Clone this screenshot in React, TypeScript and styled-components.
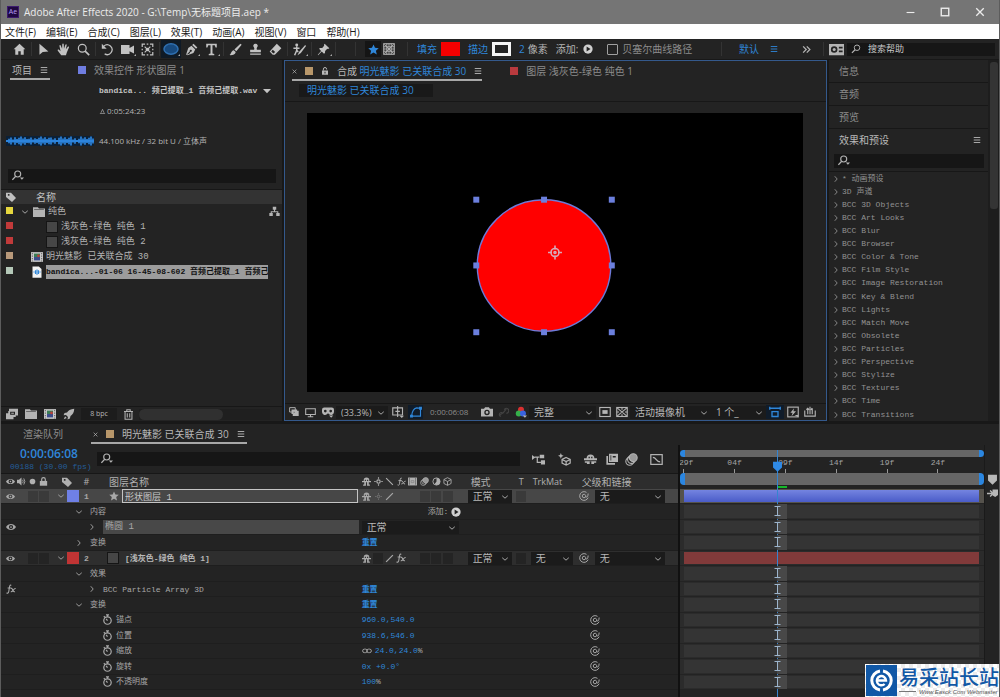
import React from 'react';
import styled, { createGlobalStyle, css } from 'styled-components';

const sans = '"Open Sans", "Noto Sans CJK SC", sans-serif';
const mono = '"Liberation Mono", "Noto Sans CJK SC", monospace';

const c = {
  panel: '#232323',
  gap: '#181818',
  field: '#161616',
  line: '#171717',
  head: '#333333',
  text: '#b4b4b4',
  dim: '#8c8c8c',
  blue: '#2f86d8',
};

const Global = createGlobalStyle`
  * { box-sizing: border-box; }
  body { margin: 0; background: ${c.gap}; }
  button, input, select { font: inherit; color: inherit; margin: 0; padding: 0; border: 0; background: none; border-radius: 0; }
  input:focus, select:focus { outline: none; }
  a { color: inherit; text-decoration: none; }
`;

/* ---------- icons ---------- */

const Svg = styled.svg<{ $s?: number }>`
  display: block;
  flex: none;
  width: ${p => p.$s ?? 14}px;
  height: ${p => p.$s ?? 14}px;
  fill: none;
  stroke: currentColor;
  stroke-width: 1.5;
`;

const F = { fill: 'currentColor', stroke: 'none' } as const;

const shapes: Record<string, React.ReactNode> = {
  home: <path {...F} d="M8 1 0.8 7.6 2.8 7.8V14.5H6.5V10H9.5V14.5H13.2V7.8L15.2 7.6Z" />,
  arrow: <path {...F} d="M3 1V14.5L7 11 14 10.5Z" />,
  hand: <path {...F} d="M5.2 15 1 9.4C.4 8.4 1.6 7.6 2.5 8.4L4.4 10 3 3.6C2.8 2.4 4.2 2.1 4.6 3.2L6.3 7.2 6.5 1.6C6.6.4 8.2.4 8.3 1.6L8.6 7 10.3 2.3C10.7 1.2 12.1 1.6 11.9 2.8L10.9 7.7 13.3 4.6C14 3.8 15.2 4.5 14.7 5.5L12.2 11.5 11 15Z" />,
  zoom: <><circle cx="6.5" cy="6.5" r="4.8" /><path d="M10 10 15 15" strokeWidth="2" /></>,
  rotate: <><path d="M3.5 3.8A6 6 0 1 1 4.5 13.4" /><path {...F} d="M1 1V7H7Z" /></>,
  camera: <path {...F} d="M0 2.5H10.5V6L16 3V13L10.5 10V13.5H0Z" />,
  pan: <><path d="M1.5 5V1.5H5M11 1.5H14.5V5M14.5 11V14.5H11M5 14.5H1.5V11M7 1.5H9M7 14.5H9M1.5 7V9M14.5 7V9" /><path d="M4.5 4.5 11.5 11.5M11.5 4.5 4.5 11.5" /><circle {...F} cx="8" cy="8" r="2.2" /></>,
  ellipse: <ellipse cx="8" cy="8" rx="7" ry="5.2" fill="#174a80" stroke="#2f6fb0" />,
  pen: <path {...F} fillRule="evenodd" d="M10.5.8 15.2 5.5 13.6 7.2 8.8 2.4ZM8 3.4 12.6 8 10.4 12.2 3 15 2.2 14.2 6 10.2A1.3 1.3 0 1 1 6.8 10.8L5.5 13 1.2 14.8 4 6Z" />,
  type: <path {...F} d="M1.5 1H14.5V5.4H13L12 2.8H9.2V13L11.4 13.5V15H4.6V13.5L6.8 13V2.8H4L3 5.4H1.5Z" />,
  brush: <path {...F} d="M14 .8 15.6 2.2 9 10 6.6 8ZM5.8 8.8 8.3 11C7.8 14 4 15.4.4 14.9 3 13.6 2.4 9.6 5.8 8.8Z" />,
  stamp: <path {...F} d="M8 .8A2.6 2.6 0 0 1 10 5.2C9.2 6.4 9.4 7.4 9.8 8.4H14.6V11.4H1.4V8.4H6.2C6.6 7.4 6.8 6.4 6 5.2A2.6 2.6 0 0 1 8 .8ZM1.4 12.8H14.6V14.6H1.4Z" />,
  eraser: <path {...F} fillRule="evenodd" d="M9.6 1 15.2 6.6 7.2 14.6H4.6L.8 10.6ZM4.6 8.4 2.8 10.6 5.4 13 7.6 11.2Z" />,
  roto: <><circle {...F} cx="4.6" cy="2.4" r="1.8" /><path d="M.5 6.5H8M4.6 4V9L2 15M4.6 9 6.4 11" strokeWidth="1.8" /><path {...F} d="M15 2.6 16 3.8 9.6 12.4 5.6 15 7.4 11Z" /></>,
  pin: <path {...F} d="M9.4.8 15.2 6.6 13.6 7.4 12.6 7 10 9.8 9.8 12.4 8.6 13.2 5.8 10.6 1.4 15 1 14.6 5 9.8 2.6 7.2 3.6 6.2 6.4 6 8.8 3.4 8.6 2Z" />,
  star: <path {...F} d="M8 .6 10.2 5.6 15.6 6.1 11.5 9.7 12.8 15.2 8 12.3 3.2 15.2 4.5 9.7.4 6.1 5.8 5.6Z" />,
  pattern: <><rect x="1" y="1" width="14" height="14" /><path strokeWidth="1.2" d="M1 5H15M1 8H15M1 11H15M5 1V15M8 1V15M11 1V15M2 2 14 14M14 2 2 14" /></>,
  play: <><circle {...F} cx="8" cy="8" r="7.4" /><path d="M5.8 4 12 8 5.8 12Z" fill="#222" stroke="none" /></>,
  menu: <path d="M1.5 3H14.5M1.5 8H14.5M1.5 13H14.5" strokeWidth="1.8" />,
  more: <path d="M2 2.5 7.5 8 2 13.5M8.5 2.5 14 8 8.5 13.5" strokeWidth="2.2" />,
  reset: <><path {...F} fillRule="evenodd" d="M0 2H16V14H0ZM5.5 4.5A3.5 3.5 0 1 0 5.5 11.5 3.5 3.5 0 1 0 5.5 4.5ZM10.5 5V7H14.5V5ZM10.5 9V11H14.5V9Z" /><circle {...F} cx="5.5" cy="8" r="1.6" /></>,
  search: <><circle cx="9.6" cy="6" r="4.4" /><path d="M6.5 9.3 1.5 14.2" strokeWidth="2" /></>,
  searchMenu: <><circle cx="7.6" cy="5.4" r="4" /><path d="M4.8 8.5.5 13" strokeWidth="1.8" /><path {...F} d="M10.5 10H16L13.2 13Z" /></>,
  down: <path d="M2.5 5.5 8 10.4 13.5 5.5" strokeWidth="1.8" />,
  right: <path d="M5.5 2.5 10.4 8 5.5 13.5" strokeWidth="1.8" />,
  tri: <path {...F} d="M0 4H16L8 12.5Z" />,
  tag: <path {...F} fillRule="evenodd" d="M0 1H8L16 9.5 9.6 16 0 8ZM3 3.2V5.8H5.6V3.2Z" />,
  folder: <path {...F} d="M0 1.5H6.5L8 3.2H16V14.5H0ZM1.5 4.2V5H14.5V4.2Z" fillRule="evenodd" />,
  comp: <><rect x="0" y="1.5" width="16" height="13" fill="#c8c8c8" stroke="none" /><path d="M1.8 2.5V14M14.2 2.5V14" stroke="#666" strokeWidth="1.4" strokeDasharray="1.8 1.6" /><rect x="4" y="3.5" width="8" height="5" fill="#3b7d56" stroke="none" /><rect x="4" y="8" width="8" height="4.5" fill="#3d4d8c" stroke="none" /><circle cx="10" cy="6.5" r="1.8" fill="#c23b3b" stroke="none" /></>,
  wav: <><path d="M2 .5H10.5L14 4V15.5H2Z" fill="#f2f2f2" stroke="none" /><path d="M4 7.4V8.6M6 5.5V10.5M8 4.5V11.5M10 5.5V10.5M12 7.4V8.6" stroke="#2f86d8" /></>,
  tree: <path {...F} d="M5.5 1H10.5V5.5H8.8V7.5H13.5V10H15.5V14.5H10.5V10H12V9H4V10H5.5V14.5H.5V10H2.5V7.5H7.2V5.5H5.5Z" />,
  interpret: <path {...F} fillRule="evenodd" d="M4 1H16V10H13V12H10V15H0V7H3V4H4ZM5.5 5V9H12V5ZM7 6.2H10.5V7.6H7Z" />,
  rocket: <path {...F} d="M15 1C10 1.4 6.6 3.4 5.4 6L2 6.6.8 9.6 4 9.2 6.6 12 6 15.2 9.2 14 10 10.6C13 8.8 14.8 5.6 15 1ZM2.8 11 1 15 5 13.2Z" />,
  trash: <path d="M1.5 3.5H14.5M5.5 3V1.2H10.5V3M3 3.5V15H13V3.5M6.2 6V12.5M9.8 6V12.5" />,
  eye: <path {...F} fillRule="evenodd" d="M0 8C3.5 1.8 12.5 1.8 16 8 12.5 14.2 3.5 14.2 0 8ZM8 4.6A3.4 3.4 0 1 0 8 11.4 3.4 3.4 0 1 0 8 4.6ZM8 6.6A1.4 1.4 0 1 1 8 9.4 1.4 1.4 0 1 1 8 6.6Z" />,
  speaker: <><path {...F} d="M0 5H3.5L8 1V15L3.5 11H0Z" /><path d="M10 5Q12 8 10 11M12 2.5Q16 8 12 13.5" /></>,
  dot: <circle {...F} cx="8" cy="8" r="5" />,
  lock: <><path {...F} d="M1.5 7H14.5V15.5H1.5Z" /><path d="M4.8 7V4.2A3.2 3.2 0 0 1 11.2 4.2V7" strokeWidth="2" /></>,
  unlock: <><path {...F} fillRule="evenodd" d="M2 7H14V15.5H2ZM7 9.5V13H9V9.5Z" /><path d="M4.8 7V4.2A3.2 3.2 0 0 1 11.2 4.2V5" strokeWidth="2" /></>,
  shy: <path {...F} d="M8 1A5 5 0 0 1 13 6V7H16V9.4H12V13.5H14V15.5H9V9.5H7V15.5H2V13.5H4V9.4H0V7H3V6A5 5 0 0 1 8 1ZM5 5V7H7V5ZM9 5V7H11V5Z" fillRule="evenodd" />,
  sun: <><circle cx="8" cy="8" r="3" strokeWidth="2" /><path d="M8 .5V3M8 13V15.5M.5 8H3M13 8H15.5" strokeWidth="2" /></>,
  back: <path d="M2 2 14 14" strokeWidth="2" />,
  slash: <path d="M2 14 14 2" strokeWidth="2.2" />,
  fx: <><path d="M8.5 2.2C6.4.8 5.8 3 5.4 6L4.4 12C4 14.6 2.6 15.4 1 14M2.6 6.4H8.4" strokeWidth="1.7" /><path d="M8 7.2C10.6 5.6 11 13.8 14.4 12.4M15.4 7.4C12.4 6.4 11 13.4 7.6 12.4" strokeWidth="1.7" /></>,
  film: <><path {...F} d="M0 1H16V15H0Z" /><path d="M2.5 2.5V14M13.5 2.5V14" stroke="#333" strokeDasharray="2 1.6" /><path d="M5.5 6.5H10.5V10H5.5Z" stroke="#777" strokeWidth="1" /></>,
  blur: <g strokeWidth="1.3"><circle cx="5.8" cy="10.2" r="4.8" /><circle cx="8" cy="8" r="4.8" /><circle cx="10.2" cy="5.8" r="4.8" fill="#9a9a9a" /></g>,
  half: <><circle cx="8" cy="8" r="6.4" strokeWidth="1.6" /><path {...F} d="M8 1.6A6.4 6.4 0 0 1 8 14.4L4.4 13 8 8Z" /></>,
  cube: <path d="M8 1.2 14.4 4.5V11.5L8 14.8 1.6 11.5V4.5ZM1.6 4.5 8 8 14.4 4.5M8 8V14.8" />,
  whip: <path strokeWidth="1.6" d="M10.8 8.2A2.8 2.8 0 1 1 8 5.2C9.6 5.2 10.8 6.4 10.8 8.2M10.8 8.2C11 11 14.6 10.4 14.6 4M14.6 10.6A7 7 0 1 1 12 2.2" />,
  watch: <><circle cx="8" cy="9.5" r="5.4" strokeWidth="1.8" /><path d="M5.8 1.2H10.2M8 1.2V4M2.6 3.4 4.6 5M8 9.5 6 7" strokeWidth="1.8" /></>,
  link: <><rect x="1" y="5" width="7.4" height="5.6" rx="2.8" /><rect x="7.6" y="5" width="7.4" height="5.6" rx="2.8" /></>,
  stack: <><path d="M1 1H10V8H1Z" /><path {...F} fillRule="evenodd" d="M4 4H13V6H15.5V14.5H6V11H4ZM7.5 7.5V10L9 9V7.5Z" /></>,
  monitor: <path d="M1 2.5H15V11H1ZM8 11V14M4 14.2H12" />,
  goggles: <path {...F} fillRule="evenodd" d="M3 2H13A3 3 0 0 1 16 5V8A4 4 0 0 1 9.5 11L8 9.5 6.5 11A4 4 0 0 1 0 8V5A3 3 0 0 1 3 2ZM4.4 5A1.8 1.8 0 1 0 4.4 8.6 1.8 1.8 0 1 0 4.4 5ZM11.6 5A1.8 1.8 0 1 0 11.6 8.6 1.8 1.8 0 1 0 11.6 5ZM9.5 12.5H15L12.2 15.5Z" />,
  grid: <><path d="M1 2.5H14V12H1ZM7.5 0V14.5M4.5 7.2H10.5" /><path {...F} d="M10 13H16L13 16Z" /></>,
  mask: <path d="M2 13.5H14V3L9 2.5C5 3 3 6 2 13.5ZM.8 12.3H3.2M12.8 1.8H15.2V4.2H12.8ZM.8 12.3V14.7H3.2V12.3Z" />,
  photo: <path {...F} fillRule="evenodd" d="M0 3.5H4L5.5 1.5H10.5L12 3.5H16V14H0ZM8 5A3.6 3.6 0 1 0 8 12.2 3.6 3.6 0 1 0 8 5ZM8 6.8A1.8 1.8 0 1 1 8 10.4 1.8 1.8 0 1 1 8 6.8Z" />,
  show: <path d="M2 13 6 9M4 14A3 3 0 1 1 7 9L12 3M9 4A3.5 3.5 0 1 1 12 9" />,
  rgb: <><circle cx="8" cy="5" r="4" fill="#d93030" stroke="none" /><circle cx="5" cy="10" r="4" fill="#35b04a" stroke="none" /><circle cx="10.6" cy="10" r="4" fill="#3a63e0" stroke="none" /><path {...F} d="M10.5 12.5H16L13.2 15.5Z" /></>,
  roi: <><rect x="1" y="2" width="14" height="12" /><path {...F} d="M4.5 5.5H11.5V10.5H4.5Z" /></>,
  alpha: <><rect x="1" y="2" width="14" height="12" /><path d="M1.5 2.5 14.5 13.5M14.5 2.5 1.5 13.5M8 2V5M8 11V14M1 8H4M12 8H15" /></>,
  pixel: <path d="M1 1V5M15 1V5M1 3H15M4 7.5H12V14H4Z" strokeWidth="1.8" />,
  fast: <><rect x="1" y="1.5" width="14" height="13" /><path {...F} d="M9.5 3 4.5 9H7.5L6 13.5 12 7H8.5ZM10 12H15V15Z" /></>,
  render: <path d="M1 6V13.5H15V6M5 3V11M11 3V11M8 1V11M3.2 5 5 3 6.8 5M9.2 5 11 3" />,
  flow: <><path {...F} d="M0 2.5 4 5.5 0 8.5ZM9.5 2H15V6.5H9.5ZM11 9H16V14H11Z" /><path d="M3 5.2H9M6.5 5.2V11.5H11" /></>,
  draft3d: <><path d="M10 5.5 15 8V12.5L10 15 5 12.5V8ZM5 8 10 10.5 15 8M10 10.5V15" /><path {...F} d="M3.5 0 4.5 2.5 7 3.5 4.5 4.5 3.5 7 2.5 4.5 0 3.5 2.5 2.5Z" /></>,
  shyBig: <path {...F} fillRule="evenodd" d="M8 2A4.8 4.8 0 0 1 12.8 6.5H16V9H0V6.5H3.2A4.8 4.8 0 0 1 8 2ZM5.6 4.6V6.5H7.2V4.6ZM8.8 4.6V6.5H10.4V4.6ZM1 10H15V12H12.4V13.6H9V10.5H7V13.6H3.6V12H1Z" />,
  frames: <><path {...F} fillRule="evenodd" d="M4 1H16V12H4ZM6 3V10H7V3ZM9 4V6H13V4Z" /><path d="M1.6 4V14.4H12" strokeWidth="2.2" /></>,
  graph: <><rect x="1" y="2" width="14" height="12" /><path d="M3.5 5.5C8 5.5 7.5 11 12.5 11" /></>,
  marker: <path {...F} d="M1.5 1H14.5V9.5L8 15.5 1.5 9.5Z" />,
  keys: <><path d="M0 8H9M4.5 3.5 9 8 4.5 12.5" strokeWidth="2" /><path {...F} d="M8 2H16V10L12 13 8 11Z" /></>,
  min: <path d="M1 8H15" strokeWidth="2" />,
  max: <rect x="2" y="2" width="12" height="12" strokeWidth="2.2" />,
  close: <path d="M2 2 14 14M14 2 2 14" strokeWidth="2.2" />,
  pyramid: <path d="M8 3 11.5 11M8 3 4.5 11M2 12.5H14" />,
};

const Ico = ({ n, s }: { n: string; s?: number }) => (
  <Svg $s={s} viewBox="0 0 16 16" aria-hidden="true">{shapes[n]}</Svg>
);

/* ---------- window frame ---------- */

const Window = styled.div`
  position: relative;
  display: flex;
  flex-direction: column;
  height: 100vh;
  overflow: hidden;
  border: solid #5c5c5c;
  border-width: 0 1px;
  background: ${c.gap};
  color: ${c.text};
  font: 10px/14px ${sans};
  white-space: nowrap;
`;

const TitleBar = styled.header`
  display: flex;
  align-items: center;
  gap: 5px;
  flex: none;
  height: 24px;
  padding: 0 4px 0 6px;
  background: #757575;
  color: #ececec;
`;

const AppBadge = styled.span`
  width: 12px;
  height: 12px;
  border: 1px solid #3c1a6e;
  background: #1f0740;
  color: #b79cf5;
  font-size: 7px;
  line-height: 10px;
  text-align: center;
`;

const TitleText = styled.h1`
  flex: 1;
  margin: 0;
  font-size: 10px;
  line-height: 16px;
  font-weight: 400;
`;

const WindowButton = styled.button`
  display: flex;
  align-items: center;
  justify-content: center;
  width: 30px;
  height: 24px;
  margin-left: 0;
`;

const MenuBar = styled.nav`
  display: flex;
  align-items: center;
  gap: 10px;
  flex: none;
  height: 15px;
  padding-left: 4px;
  background: #fff;
  color: #1c1c1c;
`;

/* ---------- tool bar ---------- */

const Toolbar = styled.div`
  display: flex;
  align-items: center;
  flex: none;
  height: 21px;
  padding: 0 4px 0 8px;
  border-bottom: 1px solid ${c.gap};
  background: ${c.panel};
`;

const ToolButton = styled.button<{ $on?: boolean }>`
  position: relative;
  display: flex;
  align-items: center;
  justify-content: center;
  width: 20px;
  height: 18px;
  color: #c2c2c2;
  ${p => p.$on && css`background: #0f1a26;`}
`;

const Corner = styled.span`
  position: absolute;
  right: 1px;
  bottom: 2px;
  border: 1px solid #aaa;
  border-color: transparent #aaa #aaa transparent;
`;

const Divider = styled.span`
  width: 1px;
  height: 14px;
  margin: 0 1px 0 2px;
  background: #333;
`;

const ShapeOptions = styled.div`
  display: flex;
  align-items: center;
  flex: 1;
  padding-left: 16px;
`;

const ModeButton = styled.button<{ $on?: boolean }>`
  display: flex;
  align-items: center;
  justify-content: center;
  width: 16px;
  height: 16px;
  background: ${p => (p.$on ? '#151515' : 'none')};
  color: ${p => (p.$on ? c.blue : '#b4b4b4')};
`;

const OptionGroup = styled.div<{ $gap?: number }>`
  display: flex;
  align-items: center;
  gap: ${p => p.$gap ?? 4}px;
  margin-left: 8px;
`;

const BlueText = styled.span`
  color: ${c.blue};
`;

const Swatch = styled.button<{ $outline?: boolean }>`
  width: 19px;
  height: 14px;
  background: ${p => (p.$outline ? '#232323' : '#f60000')};
  ${p => p.$outline && css`border: 3px solid #f4f4f4;`}
`;

const CheckLabel = styled.label`
  display: flex;
  align-items: center;
  gap: 4px;
  margin-left: 14px;
  color: ${c.dim};
`;

const Check = styled.input`
  appearance: none;
  width: 11px;
  height: 11px;
  border: 1px solid #a0a0a0;
  border-radius: 1px;
`;

const Workspace = styled.div`
  display: flex;
  align-items: center;
  gap: 10px;
  color: ${c.blue};
`;

const IconButton = styled.button<{ $w?: number; $color?: string; $bg?: string }>`
  display: flex;
  align-items: center;
  justify-content: center;
  flex: none;
  width: ${p => p.$w ?? 17}px;
  height: 14px;
  color: ${p => p.$color ?? '#b4b4b4'};
  background: ${p => p.$bg ?? 'none'};
`;

const SearchBox = styled.label<{ $w?: string; $h?: number }>`
  display: flex;
  align-items: center;
  gap: 7px;
  width: ${p => p.$w ?? 'auto'};
  height: ${p => p.$h ?? 14}px;
  padding-left: 4px;
  background: ${c.field};
  color: #b4b4b4;
`;

const SearchInput = styled.input`
  flex: 1;
  min-width: 0;
  height: 14px;
  font-size: 9px;
  line-height: 14px;
  &::placeholder { color: #c8c8c8; opacity: 1; }
`;

/* ---------- panels ---------- */

const Upper = styled.main`
  display: flex;
  gap: 2px;
  flex: 361 1 0;
  min-height: 0;
`;

const ProjectPanel = styled.section`
  display: flex;
  flex-direction: column;
  flex: 0 0 281px;
  min-width: 0;
  background: ${c.panel};
`;

const TabStrip = styled.div<{ $gap?: number; $pad?: number }>`
  display: flex;
  align-items: flex-start;
  gap: ${p => p.$gap ?? 28}px;
  flex: none;
  height: 21px;
  padding-left: ${p => p.$pad ?? 9}px;
`;

const Tab = styled.div<{ $on?: boolean; $px?: number; $gap?: number }>`
  display: flex;
  align-items: center;
  gap: ${p => p.$gap ?? 8}px;
  height: 20px;
  padding: 2px ${p => p.$px ?? 2}px 0;
  border-bottom: 2px solid ${p => (p.$on ? '#a8a8a8' : 'transparent')};
  color: ${p => (p.$on ? '#b8b8b8' : c.dim)};
`;

const Chip = styled.span<{ $c: string; $s?: number }>`
  flex: none;
  display: inline-block;
  width: ${p => p.$s ?? 8}px;
  height: ${p => p.$s ?? 8}px;
  background: ${p => p.$c};
`;

const ClipInfo = styled.div`
  flex: none;
  padding-left: 98px;
  height: 50px;
`;

const ClipName = styled.div`
  display: flex;
  align-items: center;
  gap: 6px;
  color: #c4c4c4;
  font: bold 8px/20px ${mono};
`;

const Duration = styled.div`
  display: flex;
  align-items: center;
  gap: 1px;
  font-size: 8px;
  line-height: 20px;
`;

const ClipFormat = styled.div`
  display: flex;
  align-items: center;
  gap: 5px;
  flex: none;
  height: 20px;
  padding-left: 5px;
  margin-bottom: 18px;
  font-size: 8px;
`;

const Wave = styled.svg`
  width: 88px;
  height: 10px;
  background: #0c2036;
`;

const ProjectSearch = styled.div`
  flex: none;
  padding: 0 6px 6px 7px;
  border-bottom: 1px solid ${c.line};
`;

const ProjectBody = styled.div`
  flex: 1;
  min-height: 0;
  overflow: hidden;
`;

const AssetTable = styled.table`
  width: 100%;
  table-layout: fixed;
  border-collapse: collapse;
  font: 8px/14px ${mono};
  td, th { padding: 0; height: 15px; }
  th { height: 14px; background: ${c.head}; text-align: left; font: 400 10px/14px ${sans}; color: #c0c0c0; }
  th:first-child, td:first-child { width: 28px; padding-left: 5px; }
`;

const AssetCell = styled.div<{ $indent: number }>`
  display: flex;
  align-items: center;
  gap: 3px;
  padding-left: ${p => p.$indent}px;
`;

const AssetName = styled.span<{ $on?: boolean }>`
  font-size: 9px;
  ${p => p.$on && css`
    flex: 1;
    min-width: 0;
    margin-right: 14px;
    overflow: hidden;
    background: #9c9c9c;
    color: #111;
    font-size: 8px;
    font-weight: bold;
  `}
`;

const TreeIcon = styled.span`
  margin-left: auto;
  margin-right: 2px;
`;

const SolidThumb = styled.span`
  flex: none;
  width: 12px;
  height: 12px;
  border: 1px solid #151515;
  background: #464646;
`;

const PanelFooter = styled.div`
  display: flex;
  align-items: center;
  flex: none;
  height: 15px;
  padding-left: 1px;
  border-top: 1px solid ${c.line};
`;

const BitDepth = styled.button`
  width: 36px;
  height: 12px;
  margin: 0 3px;
  background: #1c1c1c;
  font-size: 7px;
  line-height: 12px;
`;

const ScrollTrack = styled.div`
  flex: 1;
  height: 11px;
  margin: 0 12px 0 2px;
  background: #1f1f1f;
`;

const ScrollThumb = styled.div`
  width: 64%;
  height: 11px;
  border-radius: 6px;
  background: #303030;
`;

/* ---------- composition viewer ---------- */

const Viewer = styled.section`
  display: flex;
  flex-direction: column;
  flex: 1;
  min-width: 0;
  border: 1px solid #34598c;
  background: ${c.panel};
`;

const Crumbs = styled.nav`
  flex: none;
  height: 20px;
  padding: 2px 14px;
  border-bottom: 1px solid ${c.line};
`;

const Crumb = styled.a`
  display: block;
  width: 134px;
  height: 13px;
  padding-left: 8px;
  background: #191919;
  color: ${c.blue};
  line-height: 13px;
`;

const Stage = styled.div`
  flex: 1;
  min-height: 0;
  margin: 11px 23px 11px 22px;
  background: #000;
`;

const StageArt = styled.svg`
  display: block;
  width: 100%;
  height: 100%;
`;

const ViewerFooter = styled.div`
  display: flex;
  align-items: center;
  flex: none;
  height: 17px;
  border-top: 1px solid ${c.line};
  overflow: hidden;
`;

const Timecode = styled.span`
  width: 56px;
  padding-left: 7px;
  color: ${c.dim};
  font-size: 8px;
`;

const Picker = styled.span<{ $w?: string; $bg?: string; $size?: number; $pad?: number }>`
  position: relative;
  display: flex;
  align-items: center;
  flex: ${p => (p.$w ? 'none' : '1')};
  width: ${p => p.$w ?? 'auto'};
  height: 13px;
  background: ${p => p.$bg ?? '#1b1b1b'};
  color: #b8b8b8;
  font-size: ${p => p.$size ?? 9}px;
  select {
    appearance: none;
    width: 100%;
    height: 13px;
    padding-left: ${p => p.$pad ?? 5}px;
    font-family: ${sans};
    line-height: 13px;
  }
  svg { position: absolute; right: 3px; top: 3px; pointer-events: none; }
`;

const Select = ({ label, value, w, bg, size, pad }: { label: string; value: string; w?: string; bg?: string; size?: number; pad?: number }) => (
  <Picker $w={w} $bg={bg} $size={size} $pad={pad}>
    <select aria-label={label} defaultValue={value}><option>{value}</option></select>
    <Ico n="down" s={8} />
  </Picker>
);

/* ---------- effects column ---------- */

const SideColumn = styled.aside`
  display: flex;
  flex: 0 0 170px;
  background: ${c.panel};
`;

const SideMain = styled.div`
  display: flex;
  flex-direction: column;
  flex: 1;
  min-width: 0;
`;

const SideTitle = styled.h2<{ $on?: boolean }>`
  display: flex;
  align-items: center;
  justify-content: space-between;
  flex: none;
  height: 23px;
  margin: 0;
  padding: 0 7px 0 10px;
  font-size: 10px;
  line-height: 22px;
  font-weight: 400;
  color: ${p => (p.$on ? '#b8b8b8' : c.dim)};
  border-bottom: 1px solid ${p => (p.$on ? 'transparent' : c.line)};
`;

const SideSearch = styled.div`
  flex: none;
  padding: 2px 4px 3px 5px;
  border-bottom: 1px solid ${c.line};
`;

const EffectList = styled.ul`
  display: flex;
  flex-direction: column;
  flex: 1;
  min-height: 0;
  margin: 0;
  padding: 0 0 0 3px;
  list-style: none;
  color: #929292;
  font: 8px/12px ${mono};
`;

const EffectItem = styled.li`
  display: flex;
  align-items: center;
  gap: 2px;
  flex: 1;
`;

const SideScroll = styled.div`
  width: 11px;
  padding: 2px 1px 0 2px;
  background: #1d1d1d;
`;

const SideThumb = styled.div`
  height: 41%;
  border-radius: 3px;
  background: #343434;
`;

/* ---------- timeline ---------- */

const Timeline = styled.section`
  display: flex;
  flex-direction: column;
  flex: 273 1 0;
  min-height: 0;
  margin-top: 3px;
  background: ${c.panel};
`;

const TimelineBody = styled.div`
  display: flex;
  flex: 1;
  min-height: 0;
`;

const LayerSide = styled.div`
  display: flex;
  flex-direction: column;
  width: 68%;
  border-right: 2px solid #111;
`;

const TimeControls = styled.div`
  display: flex;
  align-items: center;
  flex: none;
  height: 28px;
  padding-right: 8px;
`;

const CurrentTime = styled.div`
  width: 96px;
  padding-left: 9px;
  color: #235d99;
  font: 8px/11px ${mono};
  strong {
    display: block;
    padding-left: 10px;
    color: ${c.blue};
    font: 600 12px/14px ${sans};
  }
`;

const LayerSearch = styled.div`
  flex: 1;
  margin-right: 6px;
`;

const rowGrid = css`
  display: grid;
  grid-template-columns: repeat(4, 11px) 6px 12px 12px 15px minmax(0, 1fr) 94px 12px 48px 15px 48px 88px 13px;
  align-items: center;
  padding-left: 4px;
`;

const LayerHead = styled.div`
  ${rowGrid}
  flex: none;
  height: 16px;
  border-top: 1px solid ${c.line};
  background: #2d2d2d;
  color: #b0b0b0;
  font-size: 9px;
`;

const Rows = styled.div`
  display: flex;
  flex-direction: column;
  flex: 1;
  min-height: 0;
  padding-bottom: 7px;
`;

const LayerRow = styled.div<{ $bg?: string }>`
  ${rowGrid}
  flex: 1 1 0;
  min-height: 0;
  border-bottom: 1px solid #1e1e1e;
  background: ${p => p.$bg ?? 'transparent'};
  color: #a8a8a8;
  font: 8px/13px ${mono};
`;

const Cell = styled.span<{ $col: string; $pad?: number; $center?: boolean; $big?: boolean }>`
  grid-row: 1;
  grid-column: ${p => p.$col};
  display: flex;
  align-items: center;
  justify-content: ${p => (p.$center ? 'center' : 'flex-start')};
  gap: 3px;
  min-width: 0;
  padding-left: ${p => p.$pad ?? 0}px;
  ${p => p.$big && css`font: 10px/14px ${sans};`}
`;

const SwitchSet = styled.span`
  grid-row: 1;
  grid-column: 10;
  display: grid;
  grid-template-columns: repeat(8, 1fr);
  align-items: center;
  justify-items: center;
  margin-left: 1px;
`;

const Slot = styled.span<{ $dark?: boolean }>`
  width: 10px;
  height: 11px;
  background: ${p => (p.$dark ? '#242424' : '#3a3a3a')};
`;

const DimIcon = styled.span`
  color: #7a7a7a;
`;

const NameInput = styled.input`
  width: 100%;
  height: 14px;
  margin-right: 2px;
  padding: 0 2px;
  border: 1px solid #c4c4c4;
  color: #c8c8c8;
  font-size: 9px;
  line-height: 12px;
`;

const Selected = styled.span`
  flex: 1;
  height: 14px;
  margin-right: 1px;
  padding-left: 2px;
  background: #484848;
  font-size: 9px;
  line-height: 14px;
`;

const LayerName = styled.b`
  padding-left: 3px;
  color: #b8b8b8;
`;

const Value = styled.button<{ $bold?: boolean }>`
  color: ${c.blue};
  font-weight: ${p => (p.$bold ? 'bold' : 'normal')};
`;

const ToggleBox = styled.button<{ $pull?: boolean }>`
  display: flex;
  align-items: center;
  justify-content: center;
  flex: none;
  width: ${p => (p.$pull ? 10 : 12)}px;
  height: 10px;
  margin: ${p => (p.$pull ? '0 0 0 -11px' : '0 2px 0 0')};
`;

const TrackSide = styled.div`
  position: relative;
  display: flex;
  flex-direction: column;
  flex: 1;
  min-width: 0;
  padding-top: 5px;
`;

const Range = styled.div<{ $h: number }>`
  flex: none;
  height: ${p => p.$h}px;
  border: solid #2b86e0;
  border-width: 0 5px;
  border-radius: 4px;
  background: #666;
`;

const Ruler = styled.div`
  display: flex;
  flex: none;
  height: 16px;
  overflow: hidden;
  padding-top: 1px;
  color: #a4a4a4;
  font: 8px/10px ${mono};
`;

const Tick = styled.span<{ $first?: boolean }>`
  display: flex;
  flex-direction: column;
  align-items: center;
  flex: 0 0 16.7%;
  margin-left: ${p => (p.$first ? '-7%' : '0')};
  &::after { content: ''; width: 1px; height: 4px; margin-top: 1px; background: #999; }
`;

const CacheStrip = styled.div`
  flex: none;
  height: 4px;
  padding: 1px 0 0 32%;
  &::after { content: ''; display: block; width: 10px; height: 2px; background: #14b82a; }
`;

const TrackRow = styled.div<{ $bg?: string }>`
  position: relative;
  flex: 1 1 0;
  min-height: 0;
  padding: 1px 5px 1px 4px;
  border-bottom: 1px solid #232323;
  background: ${p => p.$bg ?? '#2b2b2b'};
`;

const TrackFill = styled.div<{ $bg: string }>`
  height: 100%;
  background: ${p => p.$bg};
`;

const FrameBand = styled.span`
  position: absolute;
  z-index: 1;
  left: 32%;
  top: 0;
  bottom: 0;
  width: 10px;
  background: #484848;
`;

const Beam = styled.svg`
  position: absolute;
  left: -3px;
  top: 1px;
  width: 7px;
  height: 12px;
  fill: none;
  stroke: #9cb4cc;
`;

const Playhead = styled.div`
  position: absolute;
  top: 5px;
  bottom: 0;
  left: 32%;
  width: 1px;
  background: #3584cf;
  svg { position: absolute; left: -5px; top: 11px; color: #2f8ae6; }
`;

const Gutter = styled.div`
  display: flex;
  flex-direction: column;
  align-items: center;
  gap: 3px;
  flex: 0 0 15px;
  padding-top: 29px;
  border-left: 1px solid #1a1a1a;
  color: #b8b8b8;
`;

/* ---------- site mark ---------- */

const SiteMark = styled.div`
  position: absolute;
  z-index: 2;
  right: -1px;
  bottom: 0;
  display: flex;
  align-items: center;
  gap: 2px;
  width: 135px;
  height: 33px;
  padding: 1px;
  background: repeating-conic-gradient(#ececec 0 25%, #fff 0 50%) 0 0 / 8px 8px;
  color: #1158a6;
`;

const SiteLogo = styled.svg`
  flex: none;
  width: 31px;
  height: 31px;
`;

const SiteName = styled.div`
  font: 500 20px/22px "Noto Sans CJK SC", sans-serif;
`;

const SiteUrl = styled.div`
  display: flex;
  align-items: center;
  gap: 3px;
  color: #555;
  font: italic 6px/8px "Liberation Sans", sans-serif;
  &::before { content: ''; width: 17px; height: 1px; background: #777; }
`;

/* ---------- data ---------- */

const menus = ['文件(F)', '编辑(E)', '合成(C)', '图层(L)', '效果(T)', '动画(A)', '视图(V)', '窗口', '帮助(H)'];

const toolGroups: [string, string, boolean?][][] = [
  [['home', '主页']],
  [['arrow', '选取'], ['hand', '手形'], ['zoom', '缩放']],
  [['rotate', '旋转'], ['camera', '摄像机', true], ['pan', '锚点']],
  [['ellipse', '椭圆', true], ['pen', '钢笔', true], ['type', '文字', true]],
  [['brush', '画笔'], ['stamp', '仿制图章'], ['eraser', '橡皮擦']],
  [['roto', 'Roto 笔刷', true]],
  [['pin', '人偶位置控点', true]],
];

const effects = ['* 动画预设', '3D 声道', 'BCC 3D Objects', 'BCC Art Looks', 'BCC Blur', 'BCC Browser', 'BCC Color & Tone', 'BCC Film Style', 'BCC Image Restoration', 'BCC Key & Blend', 'BCC Lights', 'BCC Match Move', 'BCC Obsolete', 'BCC Particles', 'BCC Perspective', 'BCC Stylize', 'BCC Textures', 'BCC Time', 'BCC Transitions'];

const switches = ['shy', 'sun', 'back', 'fx', 'film', 'blur', 'half', 'cube'];

const transforms: [string, string, string?][] = [
  ['锚点', '960.0,540.0'],
  ['位置', '938.6,546.0'],
  ['缩放', '24.0,24.0', '%'],
  ['旋转', '0x +0.0°'],
  ['不透明度', '100', '%'],
];

const ticks = [':29f', '04f', '09f', '14f', '19f', '24f', ':'];
const tracks = ['blue', '', '', '', 'red', '', '', '', '', '', '', '', ''];
const wave = Array.from({ length: 44 }, (_, i) => 1 + ((i * 7) % 5) * 0.6 + (i % 11 > 3 ? 1 : 0));

/* ---------- sections ---------- */

const Tools = () => (
  <Toolbar>
    {toolGroups.map(group => (
      <React.Fragment key={group[0][0]}>
        {group.map(([icon, label, corner]) => (
          <ToolButton key={icon} $on={icon === 'ellipse'} aria-label={label}>
            <Ico n={icon} s={icon === 'ellipse' ? 16 : 13} />
            {corner && <Corner />}
          </ToolButton>
        ))}
        <Divider />
      </React.Fragment>
    ))}
    <ShapeOptions>
      <Divider />
      <OptionGroup $gap={0}>
        <ModeButton $on aria-label="工具创建形状"><Ico n="star" s={11} /></ModeButton>
        <ModeButton aria-label="工具创建蒙版"><Ico n="pattern" s={12} /></ModeButton>
      </OptionGroup>
      <OptionGroup><Divider /></OptionGroup>
      <OptionGroup><BlueText>填充</BlueText><Swatch aria-label="填充颜色" /></OptionGroup>
      <OptionGroup><BlueText>描边</BlueText><Swatch $outline aria-label="描边颜色" /></OptionGroup>
      <OptionGroup $gap={3}><BlueText>2</BlueText><span>像素</span></OptionGroup>
      <OptionGroup $gap={5}><span>添加:</span><IconButton $w={10} $color="#d0d0d0" aria-label="添加"><Ico n="play" s={10} /></IconButton></OptionGroup>
      <CheckLabel><Check type="checkbox" />贝塞尔曲线路径</CheckLabel>
    </ShapeOptions>
    <Divider />
    <OptionGroup $gap={12}>
      <Workspace>
        <OptionGroup>默认</OptionGroup>
        <IconButton $w={10} $color={c.blue} aria-label="工作区菜单"><Ico n="menu" s={8} /></IconButton>
      </Workspace>
      <IconButton $w={30} aria-label="更多工作区"><Ico n="more" s={9} /></IconButton>
    </OptionGroup>
    <Divider />
    <IconButton $w={22} aria-label="同步设置"><Ico n="reset" s={15} /></IconButton>
    <SearchBox $w="148px" $h={13}>
      <Ico n="search" s={10} />
      <SearchInput placeholder="搜索帮助" aria-label="搜索帮助" />
    </SearchBox>
  </Toolbar>
);

const Project = () => (
  <ProjectPanel>
    <TabStrip>
      <Tab $on>项目<Ico n="menu" s={8} /></Tab>
      <Tab $px={0}><Chip $c="#6f7de0" />效果控件 形状图层 1</Tab>
    </TabStrip>
    <ClipInfo>
      <ClipName>bandica... 频己提取_1 音频己提取.wav<Ico n="tri" s={8} /></ClipName>
      <Duration><Ico n="pyramid" s={7} />0:05:24:23</Duration>
    </ClipInfo>
    <ClipFormat>
      <Wave viewBox="0 0 88 10" aria-hidden="true">
        <path d={'M0 5H88' + wave.map((h, i) => `M${i * 2 + 1} ${5 - h}V${5 + h}`).join('')} stroke="#2f8ae6" strokeWidth="1.6" fill="none" />
      </Wave>
      <span>44.100 kHz / 32 bit U / 立体声</span>
    </ClipFormat>
    <ProjectSearch>
      <SearchBox><Ico n="searchMenu" s={12} /><SearchInput aria-label="搜索项目" /></SearchBox>
    </ProjectSearch>
    <ProjectBody>
      <AssetTable>
        <thead>
          <tr><th aria-label="标签"><Ico n="tag" s={10} /></th><th><AssetCell $indent={7}>名称</AssetCell></th></tr>
        </thead>
        <tbody>
          <tr>
            <td><Chip $c="#e6d73e" $s={7} /></td>
            <td><AssetCell $indent={2}><ToggleBox $pull aria-label="折叠"><Ico n="down" s={8} /></ToggleBox><Ico n="folder" s={12} /><AssetName>纯色</AssetName><TreeIcon><Ico n="tree" s={11} /></TreeIcon></AssetCell></td>
          </tr>
          {['1', '2'].map(n => (
            <tr key={n}>
              <td><Chip $c="#c13a3a" $s={7} /></td>
              <td><AssetCell $indent={17}><SolidThumb /><AssetName>浅灰色-绿色 纯色 {n}</AssetName></AssetCell></td>
            </tr>
          ))}
          <tr>
            <td><Chip $c="#b8997a" $s={7} /></td>
            <td><AssetCell $indent={2}><Ico n="comp" s={12} /><AssetName>明光魅影 已关联合成 30</AssetName></AssetCell></td>
          </tr>
          <tr>
            <td><Chip $c="#b4c8b8" $s={7} /></td>
            <td><AssetCell $indent={2}><Ico n="wav" s={12} /><AssetName $on>bandica...-01-06 16-45-08-602 音频己提取_1 音频己提取.wav</AssetName></AssetCell></td>
          </tr>
        </tbody>
      </AssetTable>
    </ProjectBody>
    <PanelFooter>
      {['interpret', 'folder', 'comp', 'rocket'].map(n => (
        <IconButton key={n} $w={19} aria-label={n}><Ico n={n} s={12} /></IconButton>
      ))}
      <BitDepth>8 bpc</BitDepth>
      <IconButton $w={17} aria-label="删除"><Ico n="trash" s={11} /></IconButton>
      <ScrollTrack><ScrollThumb /></ScrollTrack>
    </PanelFooter>
  </ProjectPanel>
);

const Composition = () => (
  <Viewer>
    <TabStrip $pad={7}>
      <Tab $on $px={0}>
        <Ico n="close" s={5} /><Chip $c="#b8976a" $s={8} /><Ico n="unlock" s={8} />
        <span>合成 <BlueText>明光魅影 已关联合成 30</BlueText></span><Ico n="menu" s={8} />
      </Tab>
      <Tab $px={0}><Chip $c="#b83a3e" />图层 浅灰色-绿色 纯色 1</Tab>
    </TabStrip>
    <Crumbs><Crumb href="#comp">明光魅影 已关联合成 30</Crumb></Crumbs>
    <Stage>
      <StageArt viewBox="0 0 496 280">
        <ellipse cx="237" cy="153" rx="67" ry="66" fill="#ff0000" stroke="#6e7ad8" strokeWidth="1.4" />
        {[87, 153, 220].map(y => [169, 237, 305].map(x => (
          (x !== 237 || y !== 153) && <rect key={`${x}-${y}`} x={x - 3} y={y - 3} width="6" height="6" fill="#6b7fdd" />
        )))}
        <g fill="none" stroke="#d8a8b8" strokeWidth="1.6">
          <circle cx="248" cy="140" r="4" />
          <circle cx="248" cy="140" r="1" />
          <path d="M248 133V137M248 143V147M241 140H245M251 140H255" />
        </g>
      </StageArt>
    </Stage>
    <ViewerFooter>
      <IconButton aria-label="始终预览"><Ico n="stack" s={10} /></IconButton>
      <IconButton aria-label="主查看器"><Ico n="monitor" s={11} /></IconButton>
      <IconButton aria-label="VR"><Ico n="goggles" s={12} /></IconButton>
      <Select label="放大率" value="(33.3%)" w="52px" />
      <IconButton $w={20} aria-label="网格"><Ico n="grid" s={12} /></IconButton>
      <IconButton $w={15} $color={c.blue} $bg="#101c2a" aria-label="蒙版可见性"><Ico n="mask" s={12} /></IconButton>
      <Timecode>0:00:06:08</Timecode>
      <IconButton $w={16} aria-label="快照"><Ico n="photo" s={12} /></IconButton>
      <IconButton $color="#444" aria-label="显示快照"><Ico n="show" s={11} /></IconButton>
      <IconButton aria-label="通道"><Ico n="rgb" s={12} /></IconButton>
      <Select label="分辨率" value="完整" w="67px" size={10} />
      <IconButton aria-label="目标区域"><Ico n="roi" s={12} /></IconButton>
      <IconButton aria-label="透明网格"><Ico n="alpha" s={12} /></IconButton>
      <Select label="3D 视图" value="活动摄像机" w="81px" size={10} />
      <Select label="视图布局" value="1 个_" w="55px" size={10} />
      <IconButton $w={18} $color={c.blue} $bg="#101c2a" aria-label="像素长宽比"><Ico n="pixel" s={12} /></IconButton>
      <IconButton aria-label="快速预览"><Ico n="fast" s={12} /></IconButton>
      <IconButton aria-label="时间轴"><Ico n="render" s={12} /></IconButton>
    </ViewerFooter>
  </Viewer>
);

const Side = () => (
  <SideColumn>
    <SideMain>
      <SideTitle>信息</SideTitle>
      <SideTitle>音频</SideTitle>
      <SideTitle>预览</SideTitle>
      <SideTitle $on>效果和预设<Ico n="menu" s={8} /></SideTitle>
      <SideSearch>
        <SearchBox><Ico n="searchMenu" s={12} /><SearchInput aria-label="搜索效果" /></SearchBox>
      </SideSearch>
      <EffectList>
        {effects.map(e => <EffectItem key={e}><Ico n="right" s={8} />{e}</EffectItem>)}
      </EffectList>
    </SideMain>
    <SideScroll><SideThumb /></SideScroll>
  </SideColumn>
);

const LayerCells = ({ n, color, children, fx, mat }: { n: number; color: string; children: React.ReactNode; fx?: boolean; mat?: boolean }) => (
  <>
    <Cell $col="1" $center><Ico n="eye" s={9} /></Cell>
    <Cell $col="3" $center><Slot $dark={fx} /></Cell>
    <Cell $col="4" $center><Slot $dark={fx} /></Cell>
    <Cell $col="6" $center><Ico n="down" s={8} /></Cell>
    <Cell $col="7"><Chip $c={color} $s={12} /></Cell>
    <Cell $col="8" $center><b>{n}</b></Cell>
    {children}
    <SwitchSet>
      <Ico n="shy" s={9} />
      {fx ? <Slot $dark /> : <DimIcon><Ico n="sun" s={7} /></DimIcon>}
      <Ico n="slash" s={9} />
      {fx ? <Ico n="fx" s={10} /> : <span />}
      <span />
      <Slot $dark={fx} /><Slot $dark={fx} /><Slot $dark={fx} />
    </SwitchSet>
    <Cell $col="12" $pad={2}><Select label="混合模式" value="正常" w="44px" size={10} /></Cell>
    <Cell $col="13" $center><Slot $dark={fx} /></Cell>
    {mat && <Cell $col="14" $pad={2}><Select label="轨道遮罩" value="无" w="42px" size={10} /></Cell>}
    <Cell $col="15" $pad={2}><Ico n="whip" s={10} /><span /><Select label="父级" value="无" size={10} /></Cell>
  </>
);

const Toggle = ({ open }: { open?: boolean }) => (
  <ToggleBox aria-label={open ? '折叠' : '展开'}><Ico n={open ? 'down' : 'right'} s={8} /></ToggleBox>
);

const Layers = () => (
  <Rows>
    <LayerRow $bg="#474747">
      <LayerCells n={1} color="#6f80e6">
        <Cell $col="9" $pad={15}><Ico n="star" s={10} /><NameInput aria-label="图层名称" defaultValue="形状图层 1" /></Cell>
      </LayerCells>
    </LayerRow>
    <LayerRow>
      <Cell $col="7 / 10" $pad={6}><Toggle open />内容</Cell>
      <Cell $col="10 / 13" $pad={68}>添加:<IconButton $w={10} $color="#d0d0d0" aria-label="添加"><Ico n="play" s={10} /></IconButton></Cell>
    </LayerRow>
    <LayerRow>
      <Cell $col="1" $center><Ico n="eye" s={10} /></Cell>
      <Cell $col="8 / 10" $pad={7}><Toggle /><Selected>椭圆 1</Selected></Cell>
      <Cell $col="10 / 13" $pad={2}><Select label="形状混合模式" value="正常" w="97px" size={10} /></Cell>
    </LayerRow>
    <LayerRow>
      <Cell $col="7 / 10" $pad={6}><Toggle />变换</Cell>
      <Cell $col="10 / 13" $pad={2}><Value $bold>重置</Value></Cell>
    </LayerRow>
    <LayerRow $bg="#2e2e2e">
      <LayerCells n={2} color="#c03434" fx mat>
        <Cell $col="9" $pad={13}><SolidThumb /><LayerName>[浅灰色-绿色 纯色 1]</LayerName></Cell>
      </LayerCells>
    </LayerRow>
    <LayerRow>
      <Cell $col="7 / 10" $pad={6}><Toggle open />效果</Cell>
    </LayerRow>
    <LayerRow>
      <Cell $col="1" $center><Ico n="fx" s={10} /></Cell>
      <Cell $col="8 / 10" $pad={7}><Toggle />BCC Particle Array 3D</Cell>
      <Cell $col="10 / 13" $pad={2}><Value $bold>重置</Value></Cell>
    </LayerRow>
    <LayerRow>
      <Cell $col="7 / 10" $pad={6}><Toggle open />变换</Cell>
      <Cell $col="10 / 13" $pad={2}><Value $bold>重置</Value></Cell>
    </LayerRow>
    {transforms.map(([name, value, unit]) => (
      <LayerRow key={name}>
        <Cell $col="9" $pad={8}><Ico n="watch" s={11} />{name}</Cell>
        <Cell $col="10 / 13" $pad={2}>{name === '缩放' && <Ico n="link" s={10} />}<span><Value>{value}</Value>{unit}</span></Cell>
        <Cell $col="15" $pad={13}><Ico n="whip" s={10} /></Cell>
      </LayerRow>
    ))}
  </Rows>
);

const Tracks = () => (
  <TrackSide>
    <Range $h={7} />
    <Ruler>{ticks.map((t, i) => <Tick key={t} $first={i === 0}>{t}</Tick>)}</Ruler>
    <Range $h={12} />
    <CacheStrip />
    <Rows>
      {tracks.map((kind, i) => (
        <TrackRow key={i} $bg={kind === 'blue' ? '#55524c' : undefined}>
          <TrackFill $bg={kind === 'blue' ? 'linear-gradient(#7484e0, #4a5cc8)' : kind === 'red' ? '#813a3a' : '#343434'} />
          {!kind && (
            <FrameBand>
              <Beam viewBox="0 0 7 12"><path d="M0.5 1.5H6.5M3.5 1.5V10.5M0.5 10.5H6.5" /></Beam>
            </FrameBand>
          )}
        </TrackRow>
      ))}
    </Rows>
    <Playhead><Ico n="marker" s={11} /></Playhead>
  </TrackSide>
);

export default function App() {
  return (
    <>
      <Global />
      <Window>
        <TitleBar>
          <AppBadge>Ae</AppBadge>
          <TitleText>Adobe After Effects 2020 - G:\Temp\无标题项目.aep *</TitleText>
          <WindowButton aria-label="最小化"><Ico n="min" s={9} /></WindowButton>
          <WindowButton aria-label="最大化"><Ico n="max" s={10} /></WindowButton>
          <WindowButton aria-label="关闭"><Ico n="close" s={10} /></WindowButton>
        </TitleBar>
        <MenuBar>{menus.map(m => <a key={m} href="#menu">{m}</a>)}</MenuBar>
        <Tools />
        <Upper>
          <Project />
          <Composition />
          <Side />
        </Upper>
        <Timeline>
          <TabStrip $pad={22}>
            <Tab $px={0}>渲染队列</Tab>
            <Tab $on $px={2}>
              <Ico n="close" s={5} /><Chip $c="#b8976a" />明光魅影 已关联合成 30<Ico n="menu" s={8} />
            </Tab>
          </TabStrip>
          <TimelineBody>
            <LayerSide>
              <TimeControls>
                <CurrentTime><strong>0:00:06:08</strong>00188 (30.00 fps)</CurrentTime>
                <LayerSearch>
                  <SearchBox><Ico n="searchMenu" s={12} /><SearchInput aria-label="搜索图层" /></SearchBox>
                </LayerSearch>
                <IconButton $w={26} aria-label="流程图"><Ico n="flow" s={13} /></IconButton>
                <IconButton $w={26} aria-label="草图 3D"><Ico n="draft3d" s={13} /></IconButton>
                <IconButton $w={26} aria-label="消隐"><Ico n="shyBig" s={13} /></IconButton>
                <IconButton $w={16} aria-label="帧混合"><Ico n="frames" s={12} /></IconButton>
                <IconButton $w={24} aria-label="运动模糊"><Ico n="blur" s={13} /></IconButton>
                <IconButton $w={26} aria-label="图表编辑器"><Ico n="graph" s={13} /></IconButton>
              </TimeControls>
              <LayerHead>
                {['eye', 'speaker', 'dot', 'lock'].map((n, i) => (
                  <Cell key={n} $col={`${i + 1}`} $center><Ico n={n} s={9} /></Cell>
                ))}
                <Cell $col="6 / 8" $center><Ico n="tag" s={10} /></Cell>
                <Cell $col="8" $center>#</Cell>
                <Cell $col="9" $big $pad={15}>图层名称</Cell>
                <SwitchSet>{switches.map(s => <Ico key={s} n={s} s={9} />)}</SwitchSet>
                <Cell $col="12" $big $pad={5}>模式</Cell>
                <Cell $col="13" $center>T</Cell>
                <Cell $col="14" $pad={4}>TrkMat</Cell>
                <Cell $col="15" $big $pad={5}>父级和链接</Cell>
              </LayerHead>
              <Layers />
            </LayerSide>
            <Tracks />
            <Gutter><Ico n="marker" s={11} /><Ico n="keys" s={11} /></Gutter>
          </TimelineBody>
        </Timeline>
        <SiteMark>
          <SiteLogo viewBox="0 0 31 31" aria-hidden="true">
            <rect width="31" height="31" fill="#1158a6" />
            <path d="M14 6A9.6 9.6 0 0 0 14 25M17 6A9.6 9.6 0 0 1 17 25" fill="none" stroke="#fff" strokeWidth="3" />
            <path d="M10 15.5H20A4.6 4.6 0 1 0 18.6 19" fill="none" stroke="#fff" strokeWidth="2.4" />
          </SiteLogo>
          <div>
            <SiteName>易采站长站</SiteName>
            <SiteUrl>Www.Easck.Com Webmaster</SiteUrl>
          </div>
        </SiteMark>
      </Window>
    </>
  );
}
